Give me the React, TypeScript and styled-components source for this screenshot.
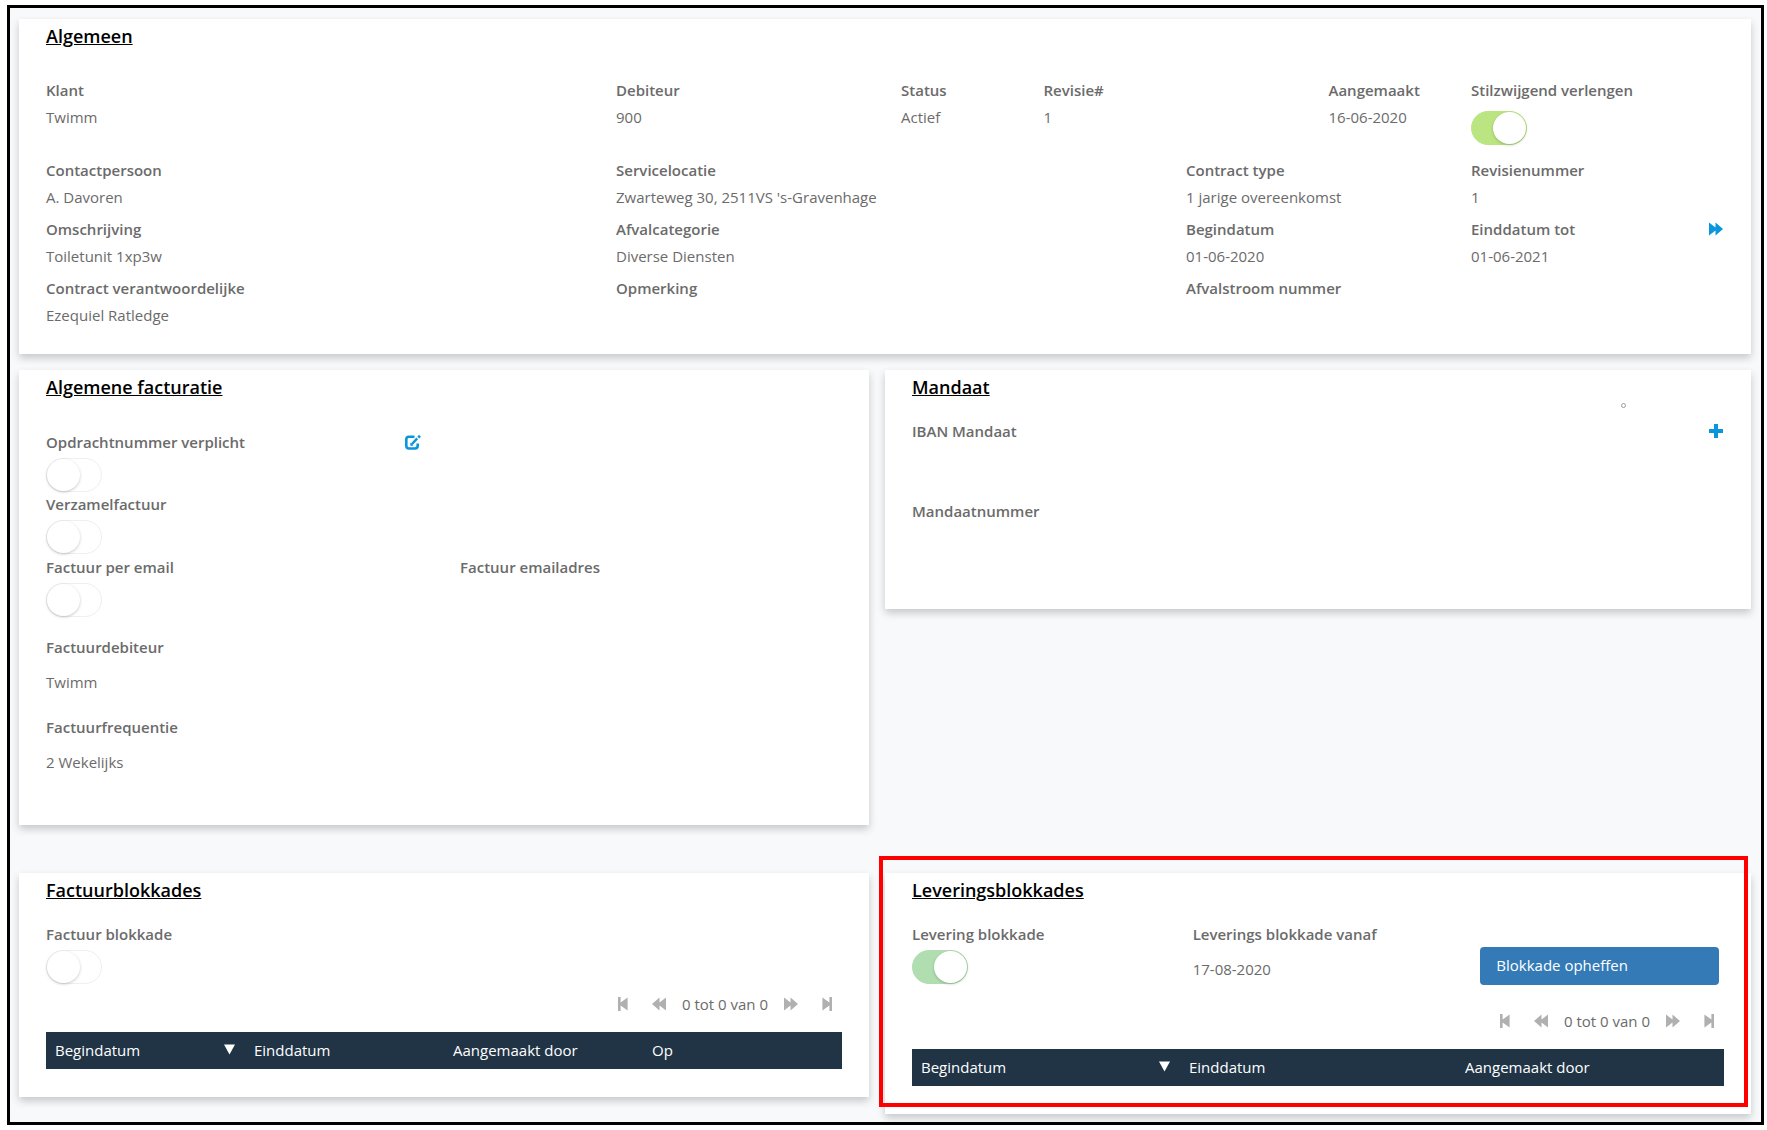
import React, { useId, useState } from "react";
import styled, { createGlobalStyle } from "styled-components";

const GlobalStyle = createGlobalStyle`
  *, *::before, *::after { box-sizing: border-box; }
  body {
    margin: 0;
    background: #fff;
    color: #6b6b6b;
    font: 400 15px/20px "Open Sans", "Noto Sans", sans-serif;
  }
`;

const Page = styled.main`
  display: flex;
  flex-direction: column;
  margin: 5px 3px 5px 7px;
  padding: 11px 10px 8px 9px;
  border: 3px solid #000;
  background: #f8f9fb;
`;

const Columns = styled.div<{ $top: number }>`
  display: grid;
  grid-template-columns: 850fr 866fr;
  align-items: start;
  gap: 16px;
  margin-top: ${(p) => p.$top}px;
`;

const Card = styled.section<{ $bottom: number; $right?: number }>`
  padding: 6px ${(p) => p.$right ?? 12}px ${(p) => p.$bottom}px 12px;
  background: #fff;
  box-shadow: 0 4px 8px rgba(0, 0, 0, 0.2);
`;

const CardHead = styled.header<{ $gap: number }>`
  display: flex;
  align-items: flex-end;
  justify-content: space-between;
  padding: 0 15px;
  margin-bottom: ${(p) => p.$gap}px;
`;

const Title = styled.h2`
  margin: 0;
  color: #000;
  font-size: 18px;
  font-weight: 600;
  line-height: 22px;
  text-decoration: underline;
`;

const Ring = styled.span`
  width: 5px;
  height: 5px;
  margin: 0 98px -10px 0;
  border: 1px solid #9a9aa8;
  border-radius: 50%;
`;

const Row = styled.div<{ $cols: number; $height: number }>`
  display: grid;
  grid-template-columns: repeat(${(p) => p.$cols}, minmax(0, 1fr));
  align-items: start;
  min-height: ${(p) => p.$height}px;
`;

const Cell = styled.div<{ $span: number; $start?: number; $gap: number }>`
  grid-column: ${(p) => (p.$start ? `${p.$start} / ` : "")}span ${(p) => p.$span};
  display: flex;
  flex-direction: column;
  align-items: flex-start;
  gap: ${(p) => p.$gap}px;
  padding: 0 15px;
  white-space: nowrap;
`;

const LabelLine = styled.div`
  display: flex;
  align-self: stretch;
  align-items: center;
  justify-content: space-between;
  height: 20px;
`;

const Name = styled.span`
  font-weight: 600;
`;

const SwitchLabel = styled.label`
  font-weight: 600;
`;

const Value = styled.span`
  font-weight: 400;
`;

const SwitchBox = styled.input<{ $tone: string }>`
  appearance: none;
  flex: none;
  width: 56px;
  height: 34px;
  margin: 0;
  border: 1px solid #efefef;
  border-radius: 17px;
  background: #fff;
  cursor: pointer;

  &::before {
    content: "";
    display: block;
    width: 33px;
    height: 32px;
    border-radius: 50%;
    background: #fff;
    box-shadow: 0 1px 3px rgba(0, 0, 0, 0.22);
  }

  &:checked {
    border-color: ${(p) => p.$tone};
    background: ${(p) => p.$tone};
  }

  &:checked::before {
    margin-left: 21px;
  }
`;

const IconButton = styled.button<{ $inset?: number }>`
  display: flex;
  padding: 0;
  margin-right: ${(p) => p.$inset ?? 0}px;
  border: 0;
  background: none;
  color: #0a95dd;
  cursor: pointer;
`;

const Pager = styled.nav<{ $top: number }>`
  display: flex;
  align-items: center;
  justify-content: flex-end;
  height: 20px;
  margin: ${(p) => p.$top}px 22px 18px;
`;

const PagerButton = styled.button`
  display: flex;
  justify-content: center;
  width: 17px;
  padding: 0;
  border: 0;
  background: none;
  color: #b0b0b0;
`;

const PagerText = styled.span`
  margin: 0 14px;
`;

const PagerGap = styled.span`
  width: 19px;
`;

const Table = styled.table`
  width: calc(100% - 30px);
  margin: 0 15px;
  border-collapse: collapse;
  table-layout: fixed;
  background: #203446;
  color: #fff;
`;

const HeadCell = styled.th<{ $width: string }>`
  width: ${(p) => p.$width};
  height: 37px;
  padding: 0 10px 2px 9px;
  font-weight: 400;
  text-align: left;
`;

const HeadLine = styled.div`
  display: flex;
  align-items: center;
  justify-content: space-between;
`;

const PrimaryButton = styled.button`
  align-self: stretch;
  height: 38px;
  margin: 23px 5px 0 7px;
  padding: 0 16px 2px;
  border: 0;
  border-radius: 4px;
  background: #337ab7;
  color: #fff;
  font: inherit;
  text-align: left;
  cursor: pointer;
`;

const Marked = styled.div`
  position: relative;

  &::after {
    content: "";
    position: absolute;
    inset: -17px 3px 7px -6px;
    border: 4px solid #f00;
    pointer-events: none;
  }
`;

const ForwardIcon = () => (
  <svg width="14" height="14" viewBox="0 0 14 14" fill="currentColor" aria-hidden="true">
    <path d="M0 0.5 6.5 5.6V0.5L14 7 6.5 13.5V8.4L0 13.5Z" />
  </svg>
);

const RewindIcon = () => (
  <svg width="14" height="14" viewBox="0 0 14 14" fill="currentColor" aria-hidden="true">
    <path d="M14 0.5 7.5 5.6V0.5L0 7 7.5 13.5V8.4L14 13.5Z" />
  </svg>
);

const FirstIcon = () => (
  <svg width="10" height="14" viewBox="0 0 10 14" fill="currentColor" aria-hidden="true">
    <path d="M0 0H2.6V5.6L9.6 0.5V13.5L2.6 8.4V14H0Z" />
  </svg>
);

const LastIcon = () => (
  <svg width="10" height="14" viewBox="0 0 10 14" fill="currentColor" aria-hidden="true">
    <path d="M10 0H7.4V5.6L0.4 0.5V13.5L7.4 8.4V14H10Z" />
  </svg>
);

const PlusIcon = () => (
  <svg width="14" height="14" viewBox="0 0 14 14" fill="currentColor" aria-hidden="true">
    <path d="M5 0H9V5H14V9H9V14H5V9H0V5H5Z" />
  </svg>
);

const EditIcon = () => (
  <svg width="16" height="15" viewBox="0 0 16 15" fill="none" stroke="currentColor" aria-hidden="true">
    <path d="M9.5 1.8H4Q1.3 1.8 1.3 4.5V10.8Q1.3 13.5 4 13.5H10Q12.7 13.5 12.7 10.8V8.6" strokeWidth="2.6" />
    <path d="M6.8 9.2 12.2 3.4" strokeWidth="2.4" />
    <path d="M13.3 2.5 15 0.8" strokeWidth="2.6" />
    <path d="M5.3 7.6V10.8H8.5Z" fill="currentColor" stroke="none" />
  </svg>
);

const SortIcon = () => (
  <svg width="11" height="11" viewBox="0 0 11 11" fill="currentColor" aria-hidden="true">
    <path d="M0 0.5H11L5.5 10.5Z" />
  </svg>
);

type FieldProps = {
  label: string;
  value?: string;
  span: number;
  start?: number;
  gap?: number;
  action?: React.ReactNode;
};

const Field = ({ label, value, span, start, gap = 7, action }: FieldProps) => (
  <Cell $span={span} $start={start} $gap={gap}>
    <LabelLine>
      <Name>{label}</Name>
      {action}
    </LabelLine>
    {value && <Value>{value}</Value>}
  </Cell>
);

type SwitchProps = {
  label: string;
  span: number;
  on?: boolean;
  tone?: string;
  gap?: number;
  action?: React.ReactNode;
};

const SwitchField = ({ label, span, on = false, tone = "#bbe581", gap = 6, action }: SwitchProps) => {
  const id = useId();
  const [checked, setChecked] = useState(on);
  return (
    <Cell $span={span} $gap={gap}>
      <LabelLine>
        <SwitchLabel htmlFor={id}>{label}</SwitchLabel>
        {action}
      </LabelLine>
      <SwitchBox
        id={id}
        type="checkbox"
        $tone={tone}
        checked={checked}
        onChange={(e) => setChecked(e.target.checked)}
      />
    </Cell>
  );
};

const Pagination = ({ top }: { top: number }) => (
  <Pager $top={top} aria-label="Paginering">
    <PagerButton type="button" aria-label="Eerste"><FirstIcon /></PagerButton>
    <PagerGap />
    <PagerButton type="button" aria-label="Vorige"><RewindIcon /></PagerButton>
    <PagerText>0 tot 0 van 0</PagerText>
    <PagerButton type="button" aria-label="Volgende"><ForwardIcon /></PagerButton>
    <PagerGap />
    <PagerButton type="button" aria-label="Laatste"><LastIcon /></PagerButton>
  </Pager>
);

const BlockTable = ({ columns }: { columns: [string, string][] }) => (
  <Table>
    <thead>
      <tr>
        {columns.map(([name, width], i) => (
          <HeadCell key={name} $width={width} scope="col">
            <HeadLine>
              {name}
              {i === 0 && <SortIcon />}
            </HeadLine>
          </HeadCell>
        ))}
      </tr>
    </thead>
  </Table>
);

export default function App() {
  return (
    <>
      <GlobalStyle />
      <Page>
        <Card $bottom={27} $right={10}>
          <CardHead $gap={33}>
            <Title>Algemeen</Title>
          </CardHead>
          <Row $cols={12} $height={80}>
            <Field label="Klant" value="Twimm" span={4} />
            <Field label="Debiteur" value="900" span={2} />
            <Field label="Status" value="Actief" span={1} />
            <Field label="Revisie#" value="1" span={1} />
            <Field label="Aangemaakt" value="16-06-2020" start={10} span={1} />
            <SwitchField label="Stilzwijgend verlengen" span={2} gap={11} on />
          </Row>
          <Row $cols={12} $height={59}>
            <Field label="Contactpersoon" value="A. Davoren" span={4} />
            <Field label="Servicelocatie" value="Zwarteweg 30, 2511VS 's-Gravenhage" span={4} />
            <Field label="Contract type" value="1 jarige overeenkomst" span={2} />
            <Field label="Revisienummer" value="1" span={2} />
          </Row>
          <Row $cols={12} $height={59}>
            <Field label="Omschrijving" value="Toiletunit 1xp3w" span={4} />
            <Field label="Afvalcategorie" value="Diverse Diensten" span={4} />
            <Field label="Begindatum" value="01-06-2020" span={2} />
            <Field
              label="Einddatum tot"
              value="01-06-2021"
              span={2}
              action={
                <IconButton type="button" aria-label="Verlengen" $inset={3}>
                  <ForwardIcon />
                </IconButton>
              }
            />
          </Row>
          <Row $cols={12} $height={49}>
            <Field label="Contract verantwoordelijke" value="Ezequiel Ratledge" span={4} />
            <Field label="Opmerking" span={4} />
            <Field label="Afvalstroom nummer" span={4} />
          </Row>
        </Card>

        <Columns $top={16}>
          <Card $bottom={28} $right={10}>
            <CardHead $gap={34}>
              <Title>Algemene facturatie</Title>
            </CardHead>
            <Row $cols={2} $height={62}>
              <SwitchField
                label="Opdrachtnummer verplicht"
                span={1}
                action={
                  <IconButton type="button" aria-label="Bewerken" $inset={9}>
                    <EditIcon />
                  </IconButton>
                }
              />
            </Row>
            <Row $cols={2} $height={63}>
              <SwitchField label="Verzamelfactuur" span={1} />
            </Row>
            <Row $cols={2} $height={80}>
              <SwitchField label="Factuur per email" span={1} />
              <Field label="Factuur emailadres" span={1} />
            </Row>
            <Row $cols={2} $height={80}>
              <Field label="Factuurdebiteur" value="Twimm" span={2} gap={15} />
            </Row>
            <Row $cols={2} $height={80}>
              <Field label="Factuurfrequentie" value="2 Wekelijks" span={2} gap={15} />
            </Row>
          </Card>

          <Card $bottom={28}>
            <CardHead $gap={23}>
              <Title>Mandaat</Title>
              <Ring />
            </CardHead>
            <Row $cols={1} $height={80}>
              <Field
                label="IBAN Mandaat"
                span={1}
                action={
                  <IconButton type="button" aria-label="Toevoegen" $inset={1}>
                    <PlusIcon />
                  </IconButton>
                }
              />
            </Row>
            <Row $cols={1} $height={80}>
              <Field label="Mandaatnummer" span={1} />
            </Row>
          </Card>
        </Columns>

        <Columns $top={48}>
          <Card $bottom={28}>
            <CardHead $gap={23}>
              <Title>Factuurblokkades</Title>
            </CardHead>
            <Row $cols={3} $height={60}>
              <SwitchField label="Factuur blokkade" span={1} />
            </Row>
            <Pagination top={10} />
            <BlockTable
              columns={[["Begindatum", "25%"], ["Einddatum", "25%"], ["Aangemaakt door", "25%"], ["Op", "25%"]]}
            />
          </Card>

          <Marked>
            <Card $bottom={28}>
              <CardHead $gap={23}>
                <Title>Leveringsblokkades</Title>
              </CardHead>
              <Row $cols={3} $height={60}>
                <SwitchField label="Levering blokkade" span={1} tone="#b1deb1" on />
                <Field label="Leverings blokkade vanaf" value="17-08-2020" span={1} gap={15} />
                <Cell $span={1} $gap={0}>
                  <PrimaryButton type="button">Blokkade opheffen</PrimaryButton>
                </Cell>
              </Row>
              <Pagination top={26} />
              <BlockTable columns={[["Begindatum", "33%"], ["Einddatum", "34%"], ["Aangemaakt door", "33%"]]} />
            </Card>
          </Marked>
        </Columns>
      </Page>
    </>
  );
}
